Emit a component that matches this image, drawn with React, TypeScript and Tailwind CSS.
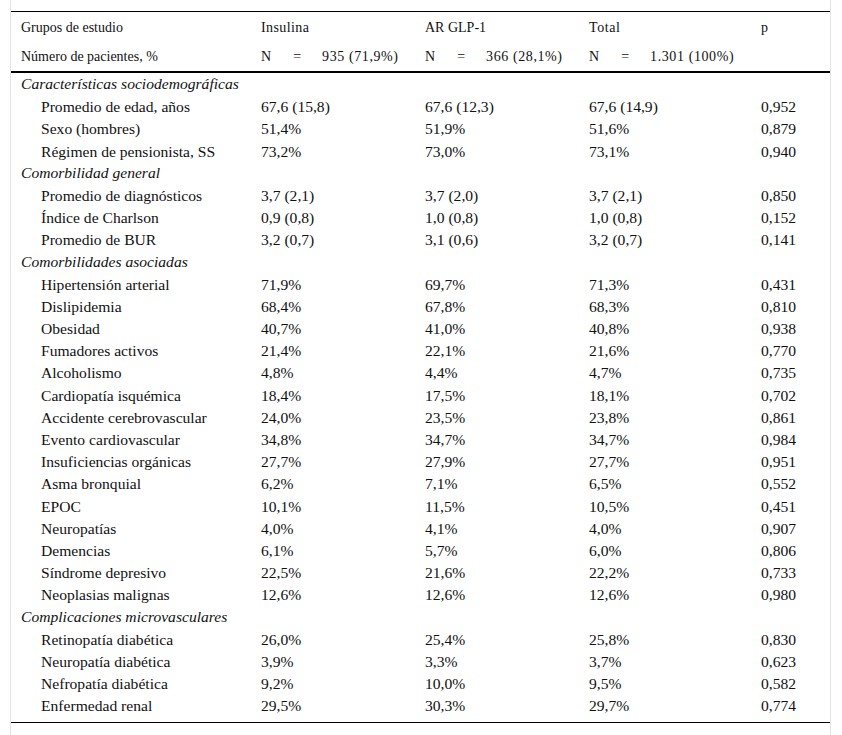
const COLS = "grid grid-cols-[240px_164px_164px_172px_1fr]";

type Row = { label: string; v: [string, string, string, string] } | { section: string };

const ROWS: Row[] = [
  { section: "Características sociodemográficas" },
  { label: "Promedio de edad, años", v: ["67,6 (15,8)", "67,6 (12,3)", "67,6 (14,9)", "0,952"] },
  { label: "Sexo (hombres)", v: ["51,4%", "51,9%", "51,6%", "0,879"] },
  { label: "Régimen de pensionista, SS", v: ["73,2%", "73,0%", "73,1%", "0,940"] },
  { section: "Comorbilidad general" },
  { label: "Promedio de diagnósticos", v: ["3,7 (2,1)", "3,7 (2,0)", "3,7 (2,1)", "0,850"] },
  { label: "Índice de Charlson", v: ["0,9 (0,8)", "1,0 (0,8)", "1,0 (0,8)", "0,152"] },
  { label: "Promedio de BUR", v: ["3,2 (0,7)", "3,1 (0,6)", "3,2 (0,7)", "0,141"] },
  { section: "Comorbilidades asociadas" },
  { label: "Hipertensión arterial", v: ["71,9%", "69,7%", "71,3%", "0,431"] },
  { label: "Dislipidemia", v: ["68,4%", "67,8%", "68,3%", "0,810"] },
  { label: "Obesidad", v: ["40,7%", "41,0%", "40,8%", "0,938"] },
  { label: "Fumadores activos", v: ["21,4%", "22,1%", "21,6%", "0,770"] },
  { label: "Alcoholismo", v: ["4,8%", "4,4%", "4,7%", "0,735"] },
  { label: "Cardiopatía isquémica", v: ["18,4%", "17,5%", "18,1%", "0,702"] },
  { label: "Accidente cerebrovascular", v: ["24,0%", "23,5%", "23,8%", "0,861"] },
  { label: "Evento cardiovascular", v: ["34,8%", "34,7%", "34,7%", "0,984"] },
  { label: "Insuficiencias orgánicas", v: ["27,7%", "27,9%", "27,7%", "0,951"] },
  { label: "Asma bronquial", v: ["6,2%", "7,1%", "6,5%", "0,552"] },
  { label: "EPOC", v: ["10,1%", "11,5%", "10,5%", "0,451"] },
  { label: "Neuropatías", v: ["4,0%", "4,1%", "4,0%", "0,907"] },
  { label: "Demencias", v: ["6,1%", "5,7%", "6,0%", "0,806"] },
  { label: "Síndrome depresivo", v: ["22,5%", "21,6%", "22,2%", "0,733"] },
  { label: "Neoplasias malignas", v: ["12,6%", "12,6%", "12,6%", "0,980"] },
  { section: "Complicaciones microvasculares" },
  { label: "Retinopatía diabética", v: ["26,0%", "25,4%", "25,8%", "0,830"] },
  { label: "Neuropatía diabética", v: ["3,9%", "3,3%", "3,7%", "0,623"] },
  { label: "Nefropatía diabética", v: ["9,2%", "10,0%", "9,5%", "0,582"] },
  { label: "Enfermedad renal", v: ["29,5%", "30,3%", "29,7%", "0,774"] },
];

function NCell({ n }: { n: string }) {
  return (
    <span className="whitespace-nowrap">
      N<span className="ml-[22px]">=</span>
      <span className="ml-[21px] tracking-[0.6px]">{n}</span>
    </span>
  );
}

export default function App() {
  return (
    <div
      className="ml-[10px] h-[735px] w-[821px] border-x border-[#e4e4e4] bg-white pt-[11px] text-[#111]"
      style={{ fontFamily: '"Liberation Serif", "Times New Roman", serif' }}
    >
      <div className="border-y border-black pb-[6px]">
        {/* header */}
        <div className="border-b-2 border-black text-[14px]">
          <div className={`${COLS} h-[30px] items-center pl-[10px]`}>
            <div>Grupos de estudio</div>
            <div className="tracking-[0.4px]">Insulina</div>
            <div>AR GLP-1</div>
            <div className="tracking-[0.6px]">Total</div>
            <div>p</div>
          </div>
          <div className={`${COLS} h-[29px] items-center pl-[10px]`}>
            <div>Número de pacientes, %</div>
            <div><NCell n="935 (71,9%)" /></div>
            <div><NCell n="366 (28,1%)" /></div>
            <div><NCell n="1.301 (100%)" /></div>
            <div />
          </div>
        </div>

        {/* body */}
        <div>
          {ROWS.map((r, i) =>
            "section" in r ? (
              <div key={i} className="flex h-[22.2px] items-center pl-[10px] text-[15.6px] italic">
                {r.section}
              </div>
            ) : (
              <div key={i} className={`${COLS} h-[22.2px] items-center pl-[10px] text-[15.6px]`}>
                <div className="pl-[20px]">{r.label}</div>
                {r.v.map((x, j) => (
                  <div key={j}>{x}</div>
                ))}
              </div>
            )
          )}
        </div>
      </div>
    </div>
  );
}
